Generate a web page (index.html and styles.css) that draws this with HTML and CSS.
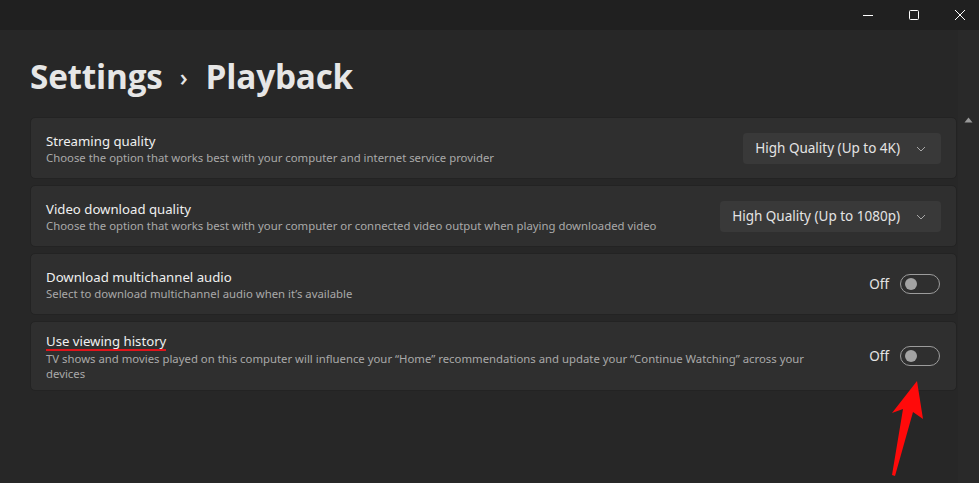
FILE: index.html
```html
<!DOCTYPE html>
<html>
<head>
<meta charset="utf-8">
<link rel="stylesheet" href="styles.css">
</head>
<body>
<div class="titlebar">
  <span class="wc"><svg width="12" height="12" viewBox="0 0 12 12"><path d="M1 6.5h10" stroke="#fff" stroke-width="1"/></svg></span>
  <span class="wc"><svg width="12" height="12" viewBox="0 0 12 12"><rect x="1.5" y="1.5" width="9" height="9" rx="1" fill="none" stroke="#fff" stroke-width="1"/></svg></span>
  <span class="wc"><svg width="12" height="12" viewBox="0 0 12 12"><path d="M1 1l10 10M11 1L1 11" stroke="#fff" stroke-width="1"/></svg></span>
</div>
<div class="main">
  <div class="content">
    <h1 class="heading"><span>Settings</span><span class="sep">›</span><span>Playback</span></h1>
    <div class="list">
      <div class="card">
        <div class="text">
          <div class="title">Streaming quality</div>
          <div class="desc">Choose the option that works best with your computer and internet service provider</div>
        </div>
        <div class="dropdown">High Quality (Up to 4K)<svg class="chev" width="10" height="6" viewBox="0 0 10 6"><path d="M1 1l4 4 4-4" fill="none" stroke="#a8a8a8" stroke-width="1"/></svg></div>
      </div>
      <div class="card">
        <div class="text">
          <div class="title">Video download quality</div>
          <div class="desc">Choose the option that works best with your computer or connected video output when playing downloaded video</div>
        </div>
        <div class="dropdown">High Quality (Up to 1080p)<svg class="chev" width="10" height="6" viewBox="0 0 10 6"><path d="M1 1l4 4 4-4" fill="none" stroke="#a8a8a8" stroke-width="1"/></svg></div>
      </div>
      <div class="card">
        <div class="text">
          <div class="title">Download multichannel audio</div>
          <div class="desc">Select to download multichannel audio when it’s available</div>
        </div>
        <div class="toggle-wrap"><span class="off">Off</span><span class="toggle"><span class="knob"></span></span></div>
      </div>
      <div class="card tall">
        <div class="text">
          <div class="title"><span class="marked">Use viewing history</span></div>
          <div class="desc">TV shows and movies played on this computer will influence your “Home” recommendations and update your “Continue Watching” across your<br>devices</div>
        </div>
        <div class="toggle-wrap"><span class="off">Off</span><span class="toggle"><span class="knob"></span></span></div>
      </div>
    </div>
  </div>
  <div class="scroll"><svg width="9" height="6" viewBox="0 0 9 6"><path d="M4.5 0.5L8.5 5.5H0.5Z" fill="#9a9a9a"/></svg></div>
</div>
<svg class="arrow" width="979" height="483" viewBox="0 0 979 483"><polygon points="917,381 923,419 913,412 895,476 892,475 903,409 892,413" fill="#ff0a0a"/></svg>
</body>
</html>
```
FILE: styles.css
```css
* { box-sizing: border-box; }
html, body { margin: 0; padding: 0; }
body {
  width: 979px;
  height: 483px;
  overflow: hidden;
  background: #272727;
  font-family: "Noto Sans", "Open Sans", sans-serif;
  color: #ffffff;
  position: relative;
}
.titlebar {
  height: 30px;
  background: #202020;
  display: flex;
  justify-content: flex-end;
  align-items: center;
  padding-right: 0;
  overflow: hidden;
}
.wc {
  width: 46px;
  height: 30px;
  flex: none;
  display: flex;
  align-items: center;
  justify-content: center;
}
.wc:last-child { margin-right: -4px; }
.main {
  display: flex;
  height: 453px;
}
.content {
  flex: 1;
  padding-left: 30px;
}
.heading {
  margin: 0;
  padding-top: 24px;
  height: 87px;
  font-family: "Open Sans", sans-serif;
  font-weight: 700;
  font-size: 33.3px;
  line-height: 44px;
  color: #e6e6e6;
  display: flex;
  align-items: baseline;
  letter-spacing: -0.2px;
}
.heading .sep {
  font-size: 24px;
  margin: 0 18px 0 17px;
  font-weight: 600;
  position: relative;
  top: -3px;
}
.list {
  display: flex;
  flex-direction: column;
  gap: 6px;
}
.card {
  background: #2f2f2f;
  border: 1px solid #232323;
  border-radius: 5px;
  height: 62px;
  display: flex;
  align-items: center;
  justify-content: space-between;
  padding: 0 15px 0 15px;
}
.card.tall {
  height: 70px;
  align-items: center;
}
.text { padding-top: 1px; }
.title {
  font-size: 13.2px;
  line-height: 17px;
  color: #f0f0f0;
}
.desc {
  font-size: 11.35px;
  line-height: 15px;
  color: #a9a9a9;
}
.marked {
  display: inline-block;
  border-bottom: 2px solid #e0141b;
  line-height: 16px;
}
.dropdown {
  height: 31px;
  background: #393939;
  border-radius: 4px;
  display: flex;
  align-items: center;
  padding: 0 15px 0 12px;
  font-size: 13.5px;
  color: #e4e4e4;
  gap: 16px;
}
.chev { margin-top: 1px; }
.toggle-wrap {
  display: flex;
  align-items: center;
  gap: 11px;
  margin-right: 1px;
}
.off {
  font-size: 13.5px;
  color: #e4e4e4;
}
.toggle {
  width: 40px;
  height: 20px;
  border: 1px solid #9c9c9c;
  border-radius: 10px;
  display: flex;
  align-items: center;
  padding-left: 4px;
}
.knob {
  width: 12px;
  height: 12px;
  border-radius: 50%;
  background: #a3a3a3;
}
.scroll {
  width: 21px;
  margin-left: 1px;
  background: #292929;
  display: flex;
  justify-content: center;
  align-items: flex-start;
  padding-top: 87px;
}
.arrow {
  position: absolute;
  left: 0;
  top: 0;
  pointer-events: none;
}
```
